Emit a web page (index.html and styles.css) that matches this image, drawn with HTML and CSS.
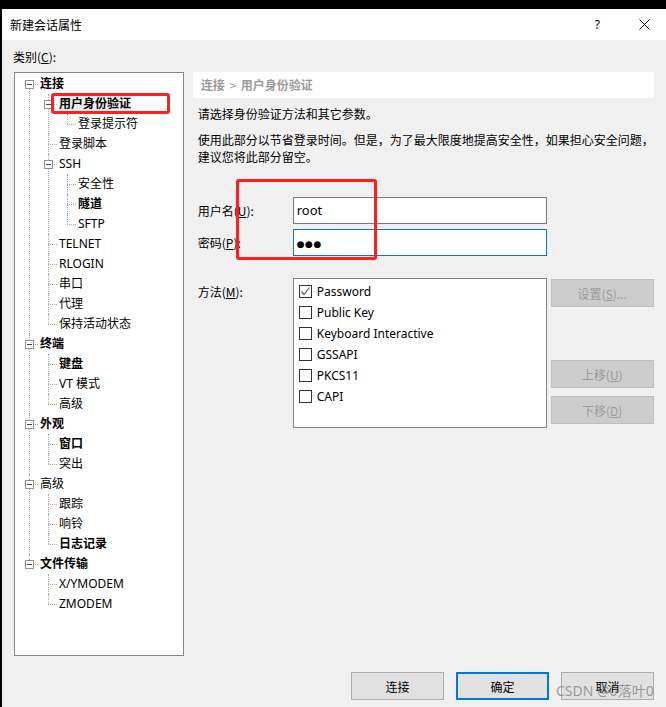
FILE: index.html
```html
<!DOCTYPE html>
<html lang="zh-CN">
<head>
<meta charset="utf-8">
<title>新建会话属性</title>
<link rel="stylesheet" href="styles.css">
</head>
<body>
<div class="window">
  <div class="titlebar">
    <span class="title">新建会话属性</span>
    <span class="help">?</span>
    <span class="close"><svg width="11" height="11" viewBox="0 0 11 11"><path d="M0.5 0.5L10.5 10.5M10.5 0.5L0.5 10.5" stroke="#000" stroke-width="1" fill="none"/></svg></span>
  </div>
  <div class="content">
    <div class="cat-label">类别(<u>C</u>):</div>
    <div class="main">
      <div class="tree">
        <ul class="root">
          <li><div class="row"><span class="exp"></span><span class="lbl b">连接</span></div>
            <ul>
              <li><div class="row"><span class="exp"></span><span class="lbl b sel">用户身份验证<span class="mark tree-mark"></span></span></div>
                <ul>
                  <li><div class="row"><span class="lbl">登录提示符</span></div></li>
                </ul>
              </li>
              <li><div class="row"><span class="lbl">登录脚本</span></div></li>
              <li><div class="row"><span class="exp"></span><span class="lbl">SSH</span></div>
                <ul>
                  <li><div class="row"><span class="lbl">安全性</span></div></li>
                  <li><div class="row"><span class="lbl b">隧道</span></div></li>
                  <li><div class="row"><span class="lbl">SFTP</span></div></li>
                </ul>
              </li>
              <li><div class="row"><span class="lbl">TELNET</span></div></li>
              <li><div class="row"><span class="lbl">RLOGIN</span></div></li>
              <li><div class="row"><span class="lbl">串口</span></div></li>
              <li><div class="row"><span class="lbl">代理</span></div></li>
              <li><div class="row"><span class="lbl">保持活动状态</span></div></li>
            </ul>
          </li>
          <li><div class="row"><span class="exp"></span><span class="lbl b">终端</span></div>
            <ul>
              <li><div class="row"><span class="lbl b">键盘</span></div></li>
              <li><div class="row"><span class="lbl">VT 模式</span></div></li>
              <li><div class="row"><span class="lbl">高级</span></div></li>
            </ul>
          </li>
          <li><div class="row"><span class="exp"></span><span class="lbl b">外观</span></div>
            <ul>
              <li><div class="row"><span class="lbl b">窗口</span></div></li>
              <li><div class="row"><span class="lbl">突出</span></div></li>
            </ul>
          </li>
          <li><div class="row"><span class="exp"></span><span class="lbl">高级</span></div>
            <ul>
              <li><div class="row"><span class="lbl">跟踪</span></div></li>
              <li><div class="row"><span class="lbl">响铃</span></div></li>
              <li><div class="row"><span class="lbl b">日志记录</span></div></li>
            </ul>
          </li>
          <li><div class="row"><span class="exp"></span><span class="lbl b">文件传输</span></div>
            <ul>
              <li><div class="row"><span class="lbl">X/YMODEM</span></div></li>
              <li><div class="row"><span class="lbl">ZMODEM</span></div></li>
            </ul>
          </li>
        </ul>
      </div>
      <div class="panel">
        <div class="crumb">连接 <span class="gt">&gt;</span> 用户身份验证</div>
        <p class="p1">请选择身份验证方法和其它参数。</p>
        <p class="p2">使用此部分以节省登录时间。但是，为了最大限度地提高安全性，如果担心安全问题，建议您将此部分留空。</p>
        <div class="form">
          <span class="mark form-mark"></span>
          <div class="frow">
            <span class="flabel">用户名(<u>U</u>):</span>
            <div class="input">root</div>
          </div>
          <div class="frow">
            <span class="flabel">密码(<u>P</u>):</span>
            <div class="input focus"><span class="dots">●●●</span></div>
          </div>
        </div>
        <div class="methods">
          <span class="flabel mlabel">方法(<u>M</u>):</span>
          <div class="list">
            <div class="item"><span class="cb"><svg width="11" height="11" viewBox="0 0 11 11"><path d="M1.5 5.5L4 8.5L9.5 1.5" stroke="#5a5a5a" stroke-width="1.2" fill="none"/></svg></span>Password</div>
            <div class="item"><span class="cb"></span>Public Key</div>
            <div class="item"><span class="cb"></span>Keyboard Interactive</div>
            <div class="item"><span class="cb"></span>GSSAPI</div>
            <div class="item"><span class="cb"></span>PKCS11</div>
            <div class="item"><span class="cb"></span>CAPI</div>
          </div>
          <div class="side">
            <div class="btn dis b-set">设置(<u>S</u>)...</div>
            <div class="btn dis b-up">上移(<u>U</u>)</div>
            <div class="btn dis b-down">下移(<u>D</u>)</div>
          </div>
        </div>
      </div>
    </div>
    <div class="footer">
      <div class="btn fbtn">连接</div>
      <div class="btn fbtn default">确定</div>
      <div class="btn fbtn">取消</div>
    </div>
    <div class="watermark">CSDN @0落叶0</div>
  </div>
</div>
</body>
</html>
```

FILE: styles.css
```css
html, body {
  margin: 0;
  padding: 0;
}
body {
  background: #000;
  width: 666px;
  height: 707px;
  overflow: hidden;
  font-family: "Noto Sans", "Noto Sans CJK SC", sans-serif;
  font-size: 12px;
  color: #000;
}
.window {
  margin: 9px 0 0 2px;
  height: 698px;
  background: #f0f0f0;
  position: relative;
}
.titlebar {
  height: 31px;
  background: #fff;
  display: flex;
  align-items: center;
  padding-left: 8px;
}
.title {
  flex: 1;
  font-family: "Noto Sans CJK SC", sans-serif;
}
.help {
  font-size: 12px;
  margin-right: 39px;
}
.close {
  display: flex;
  margin-right: 16px;
}
.content {
  padding: 0 12px 0 12px;
}
.cat-label {
  height: 32px;
  box-sizing: border-box;
  padding-top: 8px;
  line-height: 18px;
  margin-left: -1px;
  font-family: "Noto Sans CJK SC", sans-serif;
}
.main {
  display: flex;
  gap: 9px;
}
.tree {
  width: 170px;
  height: 584px;
  box-sizing: border-box;
  border: 1px solid #828790;
  background: #fff;
  padding-top: 1px;
}
.tree ul {
  list-style: none;
  margin: 0;
  padding: 0;
}
.tree ul ul {
  padding-left: 19px;
}
.tree li {
  position: relative;
}
.tree li::before {
  content: "";
  position: absolute;
  left: 14px;
  top: 10px;
  width: 9px;
  border-top: 1px dotted #a8a8a8;
}
.tree li::after {
  content: "";
  position: absolute;
  left: 14px;
  top: 0;
  bottom: 0;
  border-left: 1px dotted #a8a8a8;
}
.tree li:last-child::after {
  bottom: auto;
  height: 10px;
}
.tree .root > li:first-child::after {
  top: 10px;
}
.row {
  height: 20px;
  line-height: 20px;
  padding-left: 25px;
  display: flex;
  align-items: center;
  white-space: nowrap;
}
.exp {
  position: absolute;
  left: 10px;
  top: 6px;
  width: 9px;
  height: 9px;
  box-sizing: border-box;
  border: 1px solid #919191;
  background: #fff;
  z-index: 2;
}
.exp::after {
  content: "";
  position: absolute;
  left: 1px;
  top: 3px;
  width: 5px;
  height: 1px;
  background: #2b4a80;
}
.lbl {
  font-family: "Noto Sans", "Noto Sans CJK SC", sans-serif;
}
.lbl.b {
  font-weight: bold;
}
.lbl.sel {
  position: relative;
  background: #ececec;
}
.mark {
  position: absolute;
  border: 3px solid #fe1f1f;
  border-radius: 3px;
  box-sizing: border-box;
  z-index: 3;
}
.tree-mark {
  left: -8px;
  top: -1px;
  width: 119px;
  height: 21px;
}
.panel {
  width: 462px;
}
.crumb {
  height: 26px;
  line-height: 26px;
  background: #fff;
  padding-left: 8px;
  color: #9a9a9a;
  font-weight: bold;
  font-family: "Noto Sans CJK SC", sans-serif;
}
.gt {
  font-weight: normal;
  margin: 0 2px;
}
.panel p {
  margin: 0;
  padding-left: 5px;
  line-height: 17px;
  font-family: "Noto Sans CJK SC", sans-serif;
}
.p1 {
  margin-top: 7px !important;
}
.p2 {
  margin-top: 9px !important;
}
.form {
  position: relative;
  margin-top: 32px;
  padding-left: 5px;
  display: flex;
  flex-direction: column;
  gap: 5px;
}
.form-mark {
  left: 43px;
  top: -18px;
  width: 141px;
  height: 81px;
}
.frow {
  display: flex;
  align-items: center;
}
.flabel {
  width: 95px;
  font-family: "Noto Sans CJK SC", sans-serif;
}
.input {
  width: 254px;
  height: 27px;
  box-sizing: border-box;
  border: 1px solid #7a7a7a;
  background: #fff;
  padding-left: 3px;
  line-height: 25px;
  font-size: 13px;
}
.input.focus {
  border-color: #0078d7;
}
.dots {
  font-family: "DejaVu Sans", sans-serif;
  font-size: 9px;
  letter-spacing: 0.5px;
}
.methods {
  margin-top: 22px;
  padding-left: 5px;
  display: flex;
  align-items: flex-start;
}
.mlabel {
  margin-top: 5px;
  line-height: 17px;
}
.list {
  width: 254px;
  height: 150px;
  box-sizing: border-box;
  border: 1px solid #828282;
  background: #fff;
  padding: 2px 0 0 5px;
}
.item {
  height: 21px;
  display: flex;
  align-items: center;
  gap: 5px;
  white-space: nowrap;
}
.cb {
  width: 13px;
  height: 13px;
  box-sizing: border-box;
  border: 1px solid #333;
  background: #fff;
  display: flex;
  align-items: center;
  justify-content: center;
}
.side {
  margin-left: 4px;
  display: flex;
  flex-direction: column;
}
.btn {
  box-sizing: border-box;
  display: flex;
  align-items: center;
  justify-content: center;
  font-family: "Noto Sans CJK SC", sans-serif;
}
.dis {
  width: 103px;
  height: 28px;
  background: #cccccc;
  border: 1px solid #bfbfbf;
  color: #9b9b9b;
}
.b-set {
  margin-top: 1px;
}
.b-up {
  margin-top: 53px;
}
.b-down {
  margin-top: 8px;
}
.footer {
  margin-top: 16px;
  display: flex;
  justify-content: flex-end;
  gap: 12px;
}
.fbtn {
  width: 93px;
  height: 28px;
  background: #e1e1e1;
  border: 1px solid #adadad;
}
.fbtn.default {
  border: 2px solid #0078d7;
}
.watermark {
  position: absolute;
  left: 554px;
  top: 673px;
  font-size: 14px;
  line-height: 18px;
  color: rgba(120, 120, 120, 0.7);
  font-family: "Noto Sans", "Noto Sans CJK SC", sans-serif;
  white-space: nowrap;
}
```
